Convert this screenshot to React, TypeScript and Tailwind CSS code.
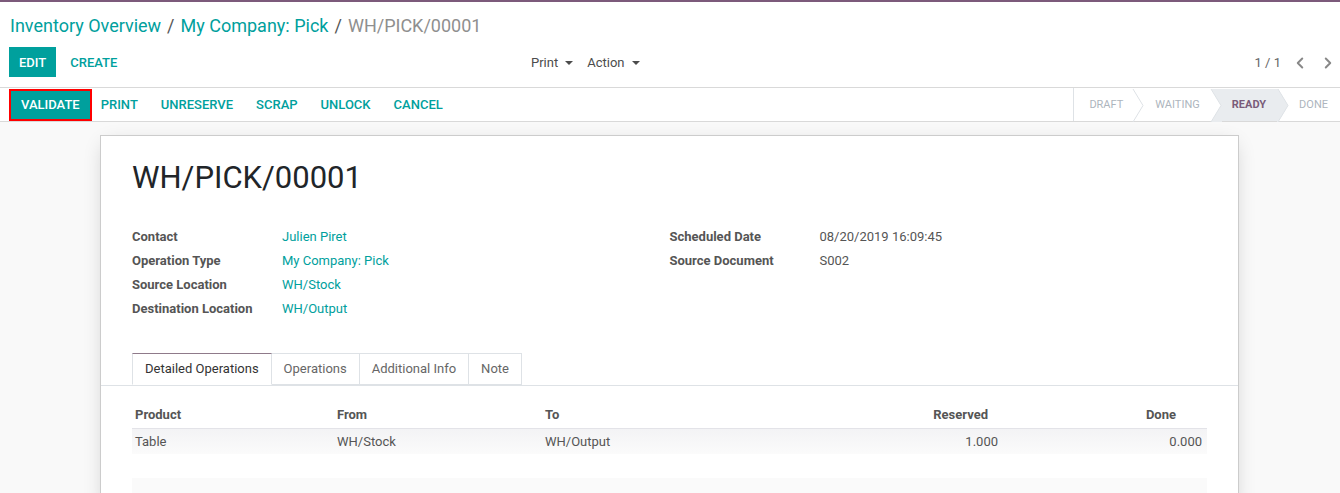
import { ChevronLeft, ChevronRight } from 'lucide-react'

const teal='text-[#00A09D]'

function Sep({ left, right }:{ left?:boolean; right?:boolean }) {
  // chevron separator of the status bar; left/right = fill grey on that side
  return (
    <svg width="12" height="33" viewBox="0 0 12 33" className="block shrink-0">
      {left&&<polygon points="0,0 1,0 11,16.5 1,33 0,33" fill="#e9ecef" />}
      {right&&<polygon points="1,0 12,0 12,33 1,33 11,16.5" fill="#e9ecef" />}
      <polyline points="1,0 11,16.5 1,33" fill="none" stroke="#dee2e6" strokeWidth="1" />
    </svg>
  )
}

function Caret() {
  return <span className="ml-[7px] inline-block h-0 w-0 border-x-[4.5px] border-t-[4.5px] border-x-transparent border-t-[#4c4c4c]" />
}

function Field({ label, value, link }:{ label:string; value:string; link?:boolean }) {
  return (
    <div className="flex h-6 items-center">
      <span className="w-[150px] font-bold text-[#555]">{label}</span>
      <span className={link?teal:'text-[#555]'}>{value}</span>
    </div>
  )
}

export default function App() {
  const actions=['PRINT','UNRESERVE','SCRAP','UNLOCK','CANCEL']
  return (
    <div className="min-h-[493px] bg-[#f9f9f9] text-[13px] text-[#4c4c4c]" style={{ fontFamily:'Roboto, "Noto Sans", sans-serif' }}>
      <div className="h-[2px] bg-[#7c5a7b]" />
      {/* control panel */}
      <div className="bg-white border-b border-[#d9d9d9]">
        <div className="flex h-[45px] items-center pl-[10px] pt-[2px] text-[18px]">
          <span className={teal}>Inventory Overview</span>
          <span className="px-[6px] text-[#555]">/</span>
          <span className={teal}>My Company: Pick</span>
          <span className="px-[6px] text-[#555]">/</span>
          <span className="text-[#8f8f8f]">WH/PICK/00001</span>
        </div>
        <div className="flex h-[40px] items-start pl-[9px]">
          <div className="flex w-[500px] items-center">
            <button className="h-[30px] bg-[#00A09D] px-[10px] pt-[1px] font-medium text-white">EDIT</button>
            <button className={`h-[30px] px-[14px] pt-[1px] font-medium ${teal}`}>CREATE</button>
          </div>
          <div className="flex h-[30px] items-center pl-[22px] pt-[1px]">
            <span className="flex items-center">Print<Caret /></span>
            <span className="ml-[14px] flex items-center">Action<Caret /></span>
          </div>
          <div className="ml-auto flex h-[30px] items-center pr-[3px] pt-[1px] text-[#666]">
            <span className="mr-[10px]">1 / 1</span>
            <ChevronLeft size={18} strokeWidth={2.6} className="text-[#888]" />
            <ChevronRight size={18} strokeWidth={2.6} className="ml-[10px] text-[#888]" />
          </div>
        </div>
      </div>
      {/* status bar */}
      <div className="flex h-[34px] items-stretch border-b border-[#d9d9d9] bg-white pl-[9px]">
        <div className="flex items-center">
          <button className="h-[32px] border-2 border-[#ff0000] bg-[#00A09D] px-[10px] font-medium text-white">VALIDATE</button>
          {actions.map((a,i)=><button key={a} className={`h-[32px] font-medium ${i===0?'pl-[9px] pr-[11.5px]':'px-[11.5px]'} ${teal}`}>{a}</button>)}
        </div>
        <div className="ml-auto flex items-stretch border-l border-[#dee2e6] pt-[1px] text-[11px] text-[#adb5bd]">
          <span className="flex items-center pl-[15px] pr-[9px]">DRAFT</span>
          <Sep />
          <span className="flex items-center pl-[11px] pr-[10px]">WAITING</span>
          <Sep right />
          <span className="flex items-center bg-[#e9ecef] pl-[10px] pr-[11px] font-bold text-[#7a5c7a]">READY</span>
          <Sep left />
          <span className="flex items-center pl-[10px] pr-[12px]">DONE</span>
        </div>
      </div>
      {/* sheet */}
      <div className="ml-[100px] mt-[13px] w-[1139px] border border-[#ccc] bg-white px-[31px] pt-[21px] shadow-[0_5px_20px_-5px_rgba(0,0,0,0.2)]">
        <h1 className="text-[31px] leading-[42px] text-[#212529]">WH/PICK/00001</h1>
        <div className="mt-[26px] grid grid-cols-2">
          <div>
            <Field label="Contact" value="Julien Piret" link />
            <Field label="Operation Type" value="My Company: Pick" link />
            <Field label="Source Location" value="WH/Stock" link />
            <Field label="Destination Location" value="WH/Output" link />
          </div>
          <div>
            <Field label="Scheduled Date" value="08/20/2019 16:09:45" />
            <Field label="Source Document" value="S002" />
          </div>
        </div>
        <div className="-mx-[31px] mt-[32px] flex border-b border-[#dee2e6] px-[31px]">
          <span className="-mb-px flex h-[32px] items-center border border-b-white border-[#dee2e6] border-t-[#8f7a8a] bg-white px-[12px] text-[#333]">Detailed Operations</span>
          <span className="flex h-[32px] items-center border-y border-r border-[#dee2e6] px-[12px] text-[#666]">Operations</span>
          <span className="flex h-[32px] items-center border-y border-r border-[#dee2e6] px-[12px] text-[#666]">Additional Info</span>
          <span className="flex h-[32px] items-center border-y border-r border-[#dee2e6] px-[12px] text-[#666]">Note</span>
        </div>
        <div className="mt-[16px]">
          <div className="flex h-[27px] items-center border-b border-[#e3e3e8] font-bold text-[#555]">
            <span className="w-[205px] pl-[3px]">Product</span>
            <span className="w-[208px]">From</span>
            <span className="w-[200px]">To</span>
            <span className="w-[243px] text-right">Reserved</span>
            <span className="w-[188px] text-right">Done</span>
          </div>
          <div className="flex h-[25px] items-center bg-gradient-to-b from-[#f3f3f5] to-[#fbfbfb] text-[#555]">
            <span className="w-[205px] pl-[3px]">Table</span>
            <span className="w-[208px]">WH/Stock</span>
            <span className="w-[200px]">WH/Output</span>
            <span className="w-[253px] text-right">1.000</span>
            <span className="w-[204px] text-right">0.000</span>
          </div>
          <div className="h-[24px]" />
          <div className="h-[30px] bg-[#fafafa]" />
        </div>
      </div>
    </div>
  )
}
